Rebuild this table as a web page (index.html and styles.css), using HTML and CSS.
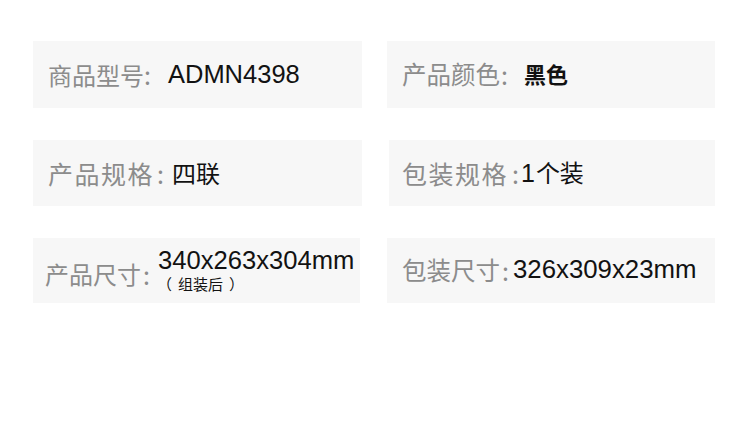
FILE: index.html
```html
<!DOCTYPE html>
<html lang="zh-CN">
<head>
<meta charset="utf-8">
<title>产品参数</title>
<link rel="stylesheet" href="styles.css">
</head>
<body>
<div class="specs">
  <div class="spec spec--model">
    <span class="label">商品型号</span><span class="colon">:</span>
    <span class="value value--latin">ADMN4398</span>
  </div>
  <div class="spec spec--color">
    <span class="label">产品颜色</span><span class="colon">:</span>
    <span class="value value--bold">黑色</span>
  </div>
  <div class="spec spec--wide spec--style">
    <span class="label">产品规格</span><span class="colon">:</span>
    <span class="value">四联</span>
  </div>
  <div class="spec spec--wide spec--shift">
    <span class="label">包装规格</span><span class="colon">:</span>
    <span class="value"><span class="num">1</span>个装</span>
  </div>
  <div class="spec spec--size">
    <span class="label label--low">产品尺寸</span><span class="colon label--low">:</span>
    <span class="value-stack">
      <span class="value value--latin">340x263x304mm</span>
      <span class="note"><span class="paren paren--open">（</span>组装后<span class="paren paren--close">）</span></span>
    </span>
  </div>
  <div class="spec spec--pack">
    <span class="label">包装尺寸</span><span class="colon">:</span>
    <span class="value value--latin">326x309x23mm</span>
  </div>
</div>
</body>
</html>
```

FILE: styles.css
```css
html, body {
  margin: 0;
  padding: 0;
  background: #ffffff;
}

body {
  width: 750px;
  height: 430px;
  overflow: hidden;
  font-family: "Noto Sans CJK SC", "Liberation Sans", sans-serif;
}

.specs {
  display: grid;
  grid-template-columns: 329px 328px;
  grid-template-rows: 67px 66px 65px;
  column-gap: 25px;
  row-gap: 32px;
  padding: 41px 0 0 33px;
}

.spec {
  display: flex;
  align-items: center;
  background: #f7f7f7;
  padding-left: 15px;
  white-space: nowrap;
}

.label {
  color: #8c8c8c;
  font-size: 24px;
  line-height: 1;
}

.colon {
  color: #8c8c8c;
  font-size: 25px;
  line-height: 1;
}

.value {
  color: #121212;
  font-size: 24px;
  line-height: 1;
}

.value--latin {
  font-family: "Liberation Sans", "Noto Sans CJK SC", sans-serif;
  font-size: 25.5px;
}

.value--bold {
  font-weight: 700;
  font-size: 22px;
  margin-top: -4px;
}

/* 商品型号 */
.spec--model .colon {
  margin: 0 17px 0 0;
}

/* 产品颜色 */
.spec--color .label {
  font-size: 24.5px;
}

.spec--color .colon {
  margin: 0 16px 0 1px;
}

/* 规格 rows */
.spec--wide .label {
  letter-spacing: 1.5px;
  font-size: 25px;
}

.spec--style .colon {
  margin: 0 8px 0 3px;
}

.spec--shift {
  margin-left: 2px;
  padding-left: 13px;
}

.spec--shift .colon {
  margin: 0 2px 0 4px;
}

.num {
  font-family: "Liberation Sans", sans-serif;
  font-size: 25px;
  margin-right: 1px;
}

/* 产品尺寸 */
.spec--size {
  padding-left: 12px;
  margin-right: 2px;
}

.spec--size .colon {
  margin-left: 2px;
  margin-right: 8px;
}

.label--low {
  margin-top: 7px;
}

.value-stack {
  display: flex;
  flex-direction: column;
  margin-top: -2px;
}

.value-stack .value {
  font-size: 25.6px;
  line-height: 27px;
}

.note {
  display: flex;
  color: #121212;
  font-size: 15px;
  line-height: 18px;
  margin-left: -1px;
  margin-top: 1px;
}

.paren--open {
  margin-right: 6px;
}

.paren--close {
  margin-left: 6px;
}

/* 包装尺寸 */
.spec--pack .label {
  font-size: 24.5px;
}

.spec--pack .colon {
  margin: 0 4px 0 2px;
}

.spec--pack .value {
  font-size: 25.8px;
  margin-top: -2px;
}
```
